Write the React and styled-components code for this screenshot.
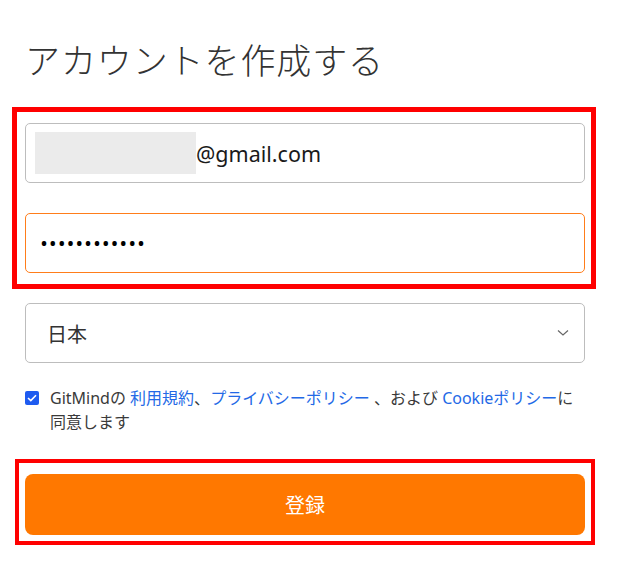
import React from 'react';
import styled, { createGlobalStyle } from 'styled-components';

const GlobalStyle = createGlobalStyle`
  body {
    margin: 0;
    background: #fff;
    font-family: "Noto Sans", "Noto Sans CJK JP", sans-serif;
  }
`;

const Page = styled.div`
  width: 560px;
  padding: 0 0 0 25px;
`;

const Title = styled.h1`
  margin: 0 0 27px;
  padding-top: 38px;
  font-size: 35px;
  font-weight: 300;
  line-height: 42px;
  color: #333;
  font-family: "Noto Sans CJK JP", sans-serif;
  letter-spacing: 0.9px;
`;

const Highlight = styled.div`
  border: ${p => p.$thick}px solid #ff0000;
  padding: ${p => p.$pad};
  margin: ${p => p.$margin};
  display: flex;
  flex-direction: column;
  gap: 30px;
`;

const Field = styled.div`
  height: 60px;
  box-sizing: border-box;
  border: 1px solid ${p => (p.$focus ? '#ff7d1a' : '#bdbdbd')};
  border-radius: 5px;
  display: flex;
  align-items: center;
  padding: 0 9px;
  font-size: 21.5px;
  color: #1a1a1a;
`;

const Redacted = styled.span`
  width: 161px;
  height: 42px;
  background: #ebebeb;
  flex: none;
`;

const Dots = styled.span`
  padding-left: 6px;
  font-size: 16px;
  letter-spacing: 2.8px;
  color: #000;
  font-weight: 700;
`;

const Select = styled.div`
  margin-top: 14px;
  height: 60px;
  box-sizing: border-box;
  border: 1px solid #bdbdbd;
  border-radius: 5px;
  display: flex;
  align-items: center;
  justify-content: space-between;
  padding: 0 15px 0 21px;
  font-size: 20px;
  color: #333;
  font-family: "Noto Sans CJK JP", sans-serif;
`;

const Agreement = styled.div`
  margin-top: 23px;
  display: flex;
  align-items: flex-start;
  gap: 11px;
  font-size: 16px;
  line-height: 24px;
  color: #3a3a3a;
  margin-bottom: 25px;
`;

const Check = styled.span`
  margin-top: 5px;
  width: 14px;
  height: 14px;
  flex: none;
  border-radius: 2px;
  background: #1e5bf0;
  display: flex;
  align-items: center;
  justify-content: center;
`;

const Link = styled.a`
  color: #2369e6;
  text-decoration: none;
`;

const Button = styled.button`
  width: 100%;
  height: 61px;
  border: none;
  border-radius: 8px;
  background: #ff7800;
  color: #fff;
  font-size: 20px;
  font-family: "Noto Sans CJK JP", sans-serif;
  display: block;
`;

export default function App() {
  return (
    <>
      <GlobalStyle />
      <Page>
        <Title>アカウントを作成する</Title>
        <Highlight $thick={5} $pad="11px 6px 11px 8px" $margin="0 -11px 0 -13px">
          <Field>
            <Redacted />
            <span>@gmail.com</span>
          </Field>
          <Field $focus>
            <Dots>••••••••••••</Dots>
          </Field>
        </Highlight>
        <Select>
          <span>日本</span>
          <svg width="12" height="8" viewBox="0 0 12 8">
            <path d="M1 1.5 L6 6 L11 1.5" fill="none" stroke="#666" strokeWidth="1.2" />
          </svg>
        </Select>
        <Agreement>
          <Check>
            <svg width="10" height="8" viewBox="0 0 10 8">
              <path d="M1 4 L3.8 6.6 L9 1.2" fill="none" stroke="#fff" strokeWidth="1.6" />
            </svg>
          </Check>
          <div>
            GitMindの <Link>利用規約</Link>、<Link>プライバシーポリシー</Link> 、および <Link>Cookieポリシー</Link>に
            <br />
            同意します
          </div>
        </Agreement>
        <Highlight $thick={4} $pad="11px 6px 6px 6px" $margin="0 -10px 0 -10px">
          <Button>登録</Button>
        </Highlight>
      </Page>
    </>
  );
}
